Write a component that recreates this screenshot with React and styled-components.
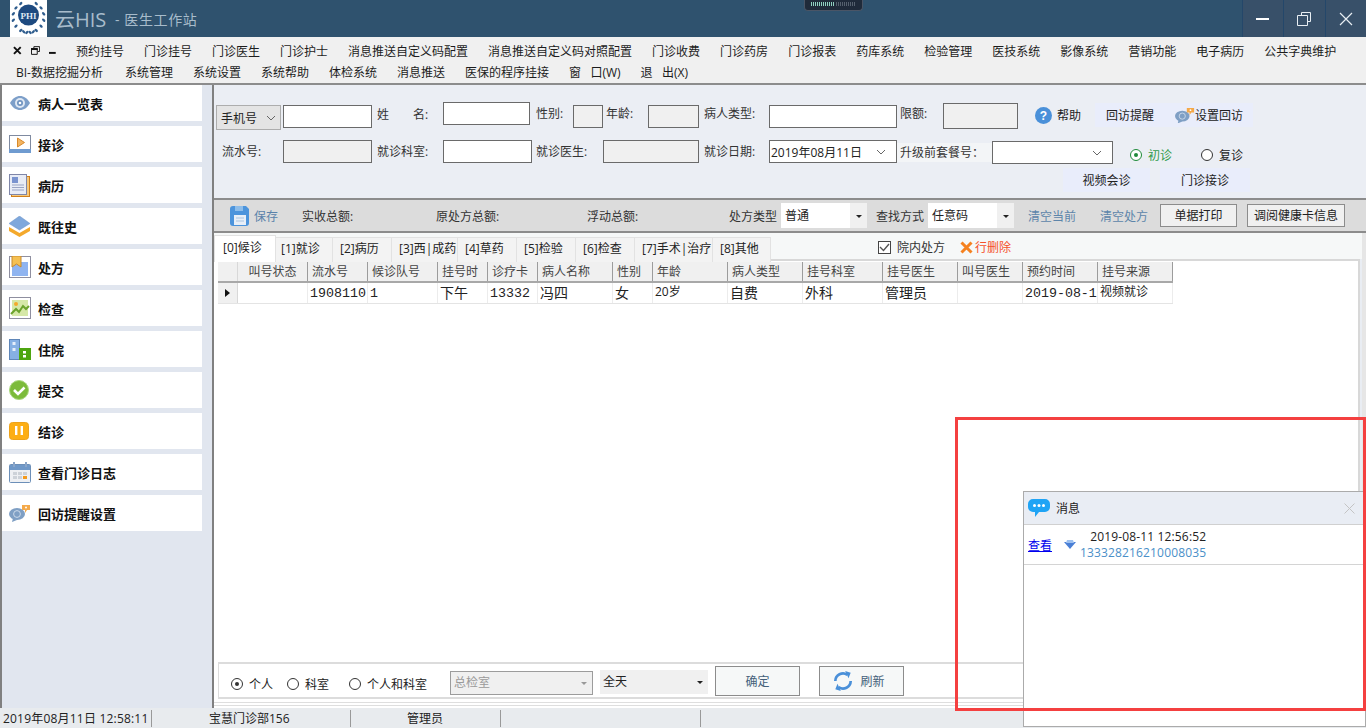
import React from "react";
import styled, { createGlobalStyle } from "styled-components";

const FONT = `"Open Sans", "Noto Sans CJK SC", "Liberation Sans", sans-serif`;

const Global = createGlobalStyle`
  html, body { margin: 0; padding: 0; overflow: hidden; background: #fff; }
  * { box-sizing: border-box; }
  body { font-family: ${FONT}; font-size: 12px; color: #333; }
`;

const TOP_MENU = ["预约挂号", "门诊挂号", "门诊医生", "门诊护士", "消息推送自定义码配置", "消息推送自定义码对照配置", "门诊收费", "门诊药房", "门诊报表", "药库系统", "检验管理", "医技系统", "影像系统", "营销功能", "电子病历", "公共字典维护"];
const SUB_MENU = ["BI-数据挖掘分析", "系统管理", "系统设置", "系统帮助", "体检系统", "消息推送", "医保的程序挂接", "窗   口(W)", "退   出(X)"];
const TABS = [["[0]候诊", 62, 8], ["[1]就诊", 57, 5], ["[2]病历", 59, 7], ["[3]西|成药", 66, 7], ["[4]草药", 59, 7], ["[5]检验", 59, 7], ["[6]检查", 59, 7], ["[7]手术|治疗", 78, 7], ["[8]其他", 58, 7]];
const COLUMNS = [
  ["叫号状态", 70, "", "center"], ["流水号", 60, "1908110", "left", true], ["候诊队号", 70, "1", "left", true], ["挂号时", 50, "下午"], ["诊疗卡", 50, "13332", "left", true],
  ["病人名称", 75, "冯四"], ["性别", 40, "女"], ["年龄", 75, "20岁", "left", false, true], ["病人类型", 75, "自费"], ["挂号科室", 80, "外科"],
  ["挂号医生", 75, "管理员"], ["叫号医生", 65, ""], ["预约时间", 75, "2019-08-1", "left", true], ["挂号来源", 75, "视频就诊", "left", false, true],
];

const Eye = () => (
  <svg width="22" height="16" viewBox="0 0 22 16"><path d="M1 8C4 3 7 1 11 1s7 2 10 7c-3 5-6 7-10 7S4 13 1 8z" fill="#7d9fc9" /><circle cx="11" cy="8" r="5" fill="#dfe8f3" /><circle cx="11" cy="8" r="3" fill="#6f93c0" /><circle cx="11" cy="8" r="1.3" fill="#fff" /></svg>
);
const Play = () => (
  <svg width="22" height="18" viewBox="0 0 22 18"><rect x=".5" y=".5" width="21" height="17" fill="#fff" stroke="#7f8aa0" /><rect y="14" width="22" height="4" fill="#6f9bd0" /><path d="M8.5 3l7 4.5-7 4.5z" fill="#f3b562" stroke="#d98a2b" /></svg>
);
const Doc = () => (
  <svg width="21" height="23" viewBox="0 0 21 23"><rect x="2.5" y="2.5" width="18" height="20" fill="#f8c878" stroke="#d0801c" /><rect x=".5" y=".5" width="17" height="20" fill="#e8ecf6" stroke="#7f86a8" /><rect x="3" y="3" width="6" height="6" fill="#7a93cf" /><path d="M3 11h12M3 13.5h12M3 16h12" stroke="#9aa4c4" /></svg>
);
const Layers = () => (
  <svg width="21" height="21" viewBox="0 0 21 21"><path d="M0 11l10.5 6L21 11v4l-10.5 6L0 15z" fill="#f4a92c" /><path d="M10.5 0L21 7.5 10.5 14 0 7.5z" fill="#7fa8dc" stroke="#6b93c8" strokeWidth=".5" /></svg>
);
const Bookmark = () => (
  <svg width="22" height="22" viewBox="0 0 22 22"><rect x=".5" y=".5" width="21" height="21" fill="#fff" stroke="#8f8fa0" /><rect x="3" y="6" width="16" height="14" fill="#8fb4f0" /><path d="M3 0h9v11L7.5 8 3 11z" fill="#f5c052" stroke="#c98a2b" /></svg>
);
const Chart = () => (
  <svg width="22" height="22" viewBox="0 0 22 22"><rect x=".5" y=".5" width="21" height="21" fill="#fff" stroke="#8f8fa0" /><rect x="3" y="3" width="16" height="16" fill="#d6e8a8" /><circle cx="7" cy="7" r="2" fill="#f4a92c" /><path d="M2 17l5-5 3 3 4-6 3 3 3-3" fill="none" stroke="#6ba32c" strokeWidth="2" /></svg>
);
const Building = () => (
  <svg width="22" height="21" viewBox="0 0 22 21"><rect x=".5" y=".5" width="10" height="20" fill="#86b0e4" stroke="#5f86b8" /><rect x="3.5" y="3" width="3" height="3" fill="#e6eefa" /><rect x="3.5" y="9" width="3" height="3" fill="#e6eefa" /><rect x="10" y="9" width="12" height="12" fill="#4da510" /><rect x="14" y="12" width="3" height="2.5" fill="#fff" /><rect x="14" y="16" width="3" height="2.5" fill="#fff" /></svg>
);
const Check = () => (
  <svg width="20" height="20" viewBox="0 0 20 20"><circle cx="10" cy="10" r="9.5" fill="#7cbb3a" stroke="#a8d77d" /><path d="M5 10l4 4 6.5-6.5" fill="none" stroke="#fff" strokeWidth="2.6" /></svg>
);
const Pause = () => (
  <svg width="20" height="18" viewBox="0 0 20 18"><rect x=".5" y=".5" width="19" height="17" rx="3" fill="#fdae14" stroke="#eda21a" /><rect x="6" y="4" width="2.4" height="9" fill="#fff" /><rect x="11.6" y="4" width="2.4" height="9" fill="#fff" /></svg>
);
const Calendar = () => (
  <svg width="22" height="21" viewBox="0 0 22 21"><rect x=".5" y="2.5" width="21" height="18" rx="1" fill="#eef0f3" stroke="#6c8fb8" /><rect x="1" y="3" width="20" height="5" fill="#6f98c8" /><rect x="4" y="0" width="2" height="5" fill="#8aa5c8" /><rect x="16" y="0" width="2" height="5" fill="#8aa5c8" /><path d="M4 10h4v3H4zM9 10h4v3H9zM14 10h4v3h-4zM4 14h4v3H4zM9 14h4v3H9z" fill="#cdd2d8" /><rect x="14" y="14" width="4" height="3" fill="#f49a1c" /></svg>
);
const Chat = ({ size = 22 }) => (
  <svg width={size} height={size * 0.82} viewBox="0 0 22 18"><ellipse cx="8" cy="10" rx="8" ry="6" fill="#7f9fc4" /><path d="M4 14l-1 4 5-2z" fill="#7f9fc4" /><circle cx="8" cy="10" r="3.4" fill="none" stroke="#cbd9ea" /><path d="M13 1h8v5h-3l-2 3V6h-3z" fill="#f4a94a" /><circle cx="17" cy="3.5" r="1" fill="#fff" /></svg>
);
const Help = () => (
  <svg width="17" height="17" viewBox="0 0 17 17"><circle cx="8.5" cy="8.5" r="8.5" fill="#4a90d9" /><text x="8.5" y="13" textAnchor="middle" fontSize="12" fontWeight="700" fill="#fff" fontFamily="Liberation Sans">?</text></svg>
);
const Save = () => (
  <svg width="19" height="20" viewBox="0 0 19 20"><path d="M3 0h13l3 3v14a3 3 0 0 1-3 3H3a3 3 0 0 1-3-3V3a3 3 0 0 1 3-3z" fill="#4c94dc" /><rect x="5" y="0" width="8" height="5" fill="#8dbdea" /><rect x="4" y="9" width="12" height="10" fill="#e8eff8" /><path d="M6 12h8M6 15h8" stroke="#a9c4e0" /></svg>
);
const Refresh = () => (
  <svg width="22" height="22" viewBox="0 0 20 20"><path d="M3 10a7 7 0 0 1 11-5.6" fill="none" stroke="#4a90d9" strokeWidth="2.4" /><path d="M12 1l5 1.5-2 5z" fill="#4a90d9" /><path d="M17 10a7 7 0 0 1-11 5.6" fill="none" stroke="#4a90d9" strokeWidth="2.4" /><path d="M8 19l-5-1.5 2-5z" fill="#4a90d9" /></svg>
);
const Bubble = () => (
  <svg width="22" height="18" viewBox="0 0 22 18"><path d="M5 0h12a5 5 0 0 1 5 5v3a5 5 0 0 1-5 5H11l-4 5v-5H5a5 5 0 0 1-5-5V5a5 5 0 0 1 5-5z" fill="#1fa4f5" /><circle cx="6.5" cy="6.5" r="1.5" fill="#fff" /><circle cx="11" cy="6.5" r="1.5" fill="#fff" /><circle cx="15.5" cy="6.5" r="1.5" fill="#fff" /></svg>
);
const Chevron = () => (
  <svg width="10" height="6" viewBox="0 0 10 6"><path d="M1 1l4 4 4-4" fill="none" stroke="#666" /></svg>
);
const Logo = () => (
  <svg width="37" height="37" viewBox="0 0 37 37">
    <rect width="37" height="37" fill="#fff" />
    <g fill="#2f5d8e">
      {Array.from({ length: 16 }).map((_, i) => {
        const side = i % 2 ? 1 : -1;
        const t = ((Math.floor(i / 2) * 24 - 60) * Math.PI) / 180;
        const cx = 18.5 + side * 15.5 * Math.cos(t);
        const cy = 17 + 15.5 * Math.sin(t);
        return <ellipse key={i} cx={cx} cy={cy} rx="2" ry="1.2" transform={`rotate(${side * 45} ${cx} ${cy})`} />;
      })}
    </g>
    <circle cx="18.5" cy="15" r="10.5" fill="#1e4a80" />
    <text x="18.5" y="18.5" textAnchor="middle" fontSize="9" fontWeight="700" fill="#dfe8f3" fontFamily="Liberation Serif">PHI</text>
  </svg>
);

const SIDE_ITEMS = [
  ["病人一览表", <Eye />], ["接诊", <Play />], ["病历", <Doc />], ["既往史", <Layers />], ["处方", <Bookmark />], ["检查", <Chart />],
  ["住院", <Building />], ["提交", <Check />], ["结诊", <Pause />], ["查看门诊日志", <Calendar />], ["回访提醒设置", <Chat />],
];

export default function App() {
  return (
    <Page>
      <Global />
      <TitleBar>
        <LogoBox><Logo /></LogoBox>
        <AppName>云HIS</AppName>
        <AppSub>- 医生工作站</AppSub>
        <Notch><NotchOn /><NotchOff /></Notch>
        <WinButtons>
          <WinButton>
            <svg width="14" height="14" viewBox="0 0 14 14"><rect y="6" width="13" height="2" fill="#fff" /></svg>
          </WinButton>
          <WinButton>
            <svg width="14" height="14" viewBox="0 0 14 14"><path d="M4.5 3.5v-3h9v9h-3M.5 3.5h10v10H.5z" fill="none" stroke="#e8eef3" /></svg>
          </WinButton>
          <WinButton>
            <svg width="14" height="14" viewBox="0 0 14 14"><path d="M1 1l12 12M13 1L1 13" stroke="#e8eef3" strokeWidth="1.2" /></svg>
          </WinButton>
        </WinButtons>
      </TitleBar>

      <MenuBar>
        <MenuRow>
          <MdiIcons>
            <svg width="9" height="9" viewBox="0 0 9 9"><path d="M1 1l7 7M8 1L1 8" stroke="#111" strokeWidth="2" /></svg>
            <svg width="10" height="9" viewBox="0 0 10 9"><path d="M3 2V.5h6v5H7M.5 2.5h6v6h-6z" fill="none" stroke="#111" /><rect y="2" width="7" height="2" fill="#111" /></svg>
            <svg width="7" height="9" viewBox="0 0 7 9"><rect y="6" width="7" height="2" fill="#111" /></svg>
          </MdiIcons>
          {TOP_MENU.map(m => <MenuItem key={m}>{m}</MenuItem>)}
        </MenuRow>
        <MenuRow $sub>
          {SUB_MENU.map(m => <MenuItem key={m}>{m}</MenuItem>)}
        </MenuRow>
      </MenuBar>

      <Body>
        <Sidebar>
          {SIDE_ITEMS.map(([label, icon]) => (
            <SideCard key={label}>
              <SideIcon>{icon}</SideIcon>
              {label}
            </SideCard>
          ))}
        </Sidebar>

        <Content>
          <Form>
            <FormRow $h={38}>
              <Select $w={65} $mt={3} $h={25}>手机号<Chevron /></Select>
              <Gap $w={2} />
              <Input $w={89} $mt={3} />
              <Label $w={41} $mt={3} $pl={5}>姓</Label>
              <Label $w={30} $mt={3} $pl={0}>名:</Label>
              <Input $w={87} />
              <Label $w={43} $mt={2}>性别:</Label>
              <Input $w={30} $mt={3} $off />
              <Label $w={45} $mt={2} $pl={3}>年龄:</Label>
              <Input $w={51} $mt={3} $off />
              <Label $w={70} $mt={2} $pl={5}>病人类型:</Label>
              <Input $w={128} $mt={3} />
              <Label $w={46} $mt={2} $pl={3}>限额:</Label>
              <Input $w={75} $mt={1} $h={26} $off />
              <HelpWrap><Help />帮助</HelpWrap>
              <SoftButton $w={70} $mt={1}>回访提醒</SoftButton>
              <SoftButton $w={88} $mt={1}><Chat size={20} />设置回访</SoftButton>
            </FormRow>
            <FormRow $h={28}>
              <Label $w={67} $mt={2}>流水号:</Label>
              <Input $w={89} $off />
              <Label $w={71} $pl={5} $mt={2}>就诊科室:</Label>
              <Input $w={89} />
              <Label $w={71} $pl={4} $mt={2}>就诊医生:</Label>
              <Input $w={96} $off />
              <Label $w={70} $pl={5} $mt={2}>就诊日期:</Label>
              <Input $w={128} $date>2019年08月11日<Chevron /></Input>
              <PlanLabel>升级前套餐号：</PlanLabel>
              <Input $w={121} $date $mt={1}><span /><Chevron /></Input>
              <RadioItem $ml={17} $w={71} $green $mt={6}><Radio $on $green />初诊</RadioItem>
              <RadioItem $mt={6}><Radio />复诊</RadioItem>
            </FormRow>
            <FormRow $h={24}>
              <SoftButton $w={87} $ml={847} $mt={0}>视频会诊</SoftButton>
              <SoftButton $w={90} $ml={10} $mt={0}>门诊接诊</SoftButton>
            </FormRow>
          </Form>

          <Toolbar>
            <SaveWrap><Save />保存</SaveWrap>
            <ToolText $w={134}>实收总额:</ToolText>
            <ToolText $w={151}>原处方总额:</ToolText>
            <ToolText $w={142}>浮动总额:</ToolText>
            <ToolText $w={52}>处方类型</ToolText>
            <Combo $w={86}>普通<ComboArrow /></Combo>
            <ToolText $w={52} $ml={9}>查找方式</ToolText>
            <Combo $w={86}>任意码<ComboArrow /></Combo>
            <ToolLink $w={72} $ml={14}>清空当前</ToolLink>
            <ToolLink $w={60}>清空处方</ToolLink>
            <ToolButton $w={77}>单据打印</ToolButton>
            <ToolButton $w={98} $ml={10}>调阅健康卡信息</ToolButton>
          </Toolbar>

          <Records>
            <TabStrip>
              {TABS.map(([t, w, pad], i) => <Tab key={t} $w={w} $pad={pad} $active={i === 0}>{t}</Tab>)}
              <CheckWrap><CheckBox><svg width="11" height="9" viewBox="0 0 11 9"><path d="M1 4l3.5 3.5L10 1" fill="none" stroke="#555" strokeWidth="1.4" /></svg></CheckBox>院内处方</CheckWrap>
              <DeleteRow>
                <svg width="13" height="13" viewBox="0 0 13 13"><path d="M1.5 1.5l10 10M11.5 1.5l-10 10" stroke="#f5811f" strokeWidth="3" /></svg>
                行删除
              </DeleteRow>
            </TabStrip>

            <GridArea>
              <Grid>
                <GridRow $head>
                  <RowHead $head />
                  {COLUMNS.map(([h, w, , a]) => <HeadCell key={h} $w={w} $align={a}>{h}</HeadCell>)}
                </GridRow>
                <GridRow>
                  <RowHead><RowArrow /></RowHead>
                  {COLUMNS.map(([h, w, v, , mono, small]) => <DataCell key={h} $w={w} $mono={mono} $small={small}>{v}</DataCell>)}
                </GridRow>
              </Grid>
            </GridArea>
          </Records>

          <BottomBar>
            <BottomInner>
              <RadioItem $ml={12} $w={56} $mt={6}><Radio $on />个人</RadioItem>
              <RadioItem $w={62} $mt={6}><Radio />科室</RadioItem>
              <RadioItem $w={101} $mt={6}><Radio />个人和科室</RadioItem>
              <DisabledSelect>总检室<ComboArrow $gray /></DisabledSelect>
              <DayCombo>全天<ComboArrow /></DayCombo>
              <PlainButton $ml={7}>确定</PlainButton>
              <PlainButton $ml={19} $pr={6}><Refresh />刷新</PlainButton>
            </BottomInner>
            <BottomRule />
          </BottomBar>
        </Content>
      </Body>

      <StatusBar>
        <StatusCell $w={152} $pl={3} $ls={0.2}>2019年08月11日 12:58:11</StatusCell>
        <StatusCell $w={199} $pl={57}>宝慧门诊部156</StatusCell>
        <StatusCell $w={150} $pl={56}>管理员</StatusCell>
        <StatusCell $w={200} />
      </StatusBar>

      <RedFrame />
      <Popup>
        <PopupHead>
          <Bubble />
          <PopupTitle>消息</PopupTitle>
          <PopupClose>
            <svg width="11" height="11" viewBox="0 0 11 11"><path d="M.5.5l10 10M10.5.5l-10 10" stroke="#c4c4c4" /></svg>
          </PopupClose>
        </PopupHead>
        <PopupRow>
          <PopupLink>查看</PopupLink>
          <svg width="12" height="9" viewBox="0 0 12 9"><path d="M0 2h12L6 9z" fill="#4a7fd6" /><path d="M3 0h6l1 3H2z" fill="#9cc0f0" /></svg>
          <PopupText>
            <PopupTime>2019-08-11 12:56:52</PopupTime>
            <PopupCode>133328216210008035</PopupCode>
          </PopupText>
        </PopupRow>
      </Popup>
    </Page>
  );
}

const Page = styled.div`
  position: relative;
  width: 1366px;
  height: 728px;
  display: flex;
  flex-direction: column;
  overflow: hidden;
  background: #e9edf3;
`;

const TitleBar = styled.div`
  position: relative;
  flex: none;
  height: 37px;
  display: flex;
  align-items: center;
  padding-left: 10px;
  background: #2f526e;
`;
const LogoBox = styled.div`
  width: 37px;
  height: 37px;
`;
const AppName = styled.div`
  margin-left: 8px;
  width: 60px;
  font-size: 20px;
  color: #a8bccb;
`;
const AppSub = styled.div`
  font-size: 14px;
  letter-spacing: 0.6px;
  color: #a8bccb;
`;
const Notch = styled.div`
  position: absolute;
  left: 804px;
  top: 0;
  width: 59px;
  height: 11px;
  display: flex;
  gap: 2px;
  padding: 2px 6px 4px;
  background: #1f2a3a;
  border: 1px solid #4a5566;
  border-top: none;
  border-radius: 0 0 4px 4px;
`;
const NotchOn = styled.div`
  width: 23px;
  background: repeating-linear-gradient(90deg, #8fd0c0 0 1px, transparent 1px 2px);
`;
const NotchOff = styled.div`
  width: 20px;
  background: repeating-linear-gradient(90deg, #55606e 0 1px, transparent 1px 2px);
`;
const WinButtons = styled.div`
  margin-left: auto;
  display: flex;
  height: 37px;
`;
const WinButton = styled.div`
  width: 41.5px;
  display: flex;
  align-items: center;
  justify-content: center;
  background: #385069;
  border-left: 1px solid #24476a;
`;

const MenuBar = styled.div`
  flex: none;
  height: 48px;
  padding-top: 3px;
  background: #f0f0f0;
  border-bottom: 2px solid #8c8c8c;
`;
const MenuRow = styled.div`
  display: flex;
  align-items: center;
  gap: 20px;
  height: 21px;
  padding-left: ${p => (p.$sub ? "16px" : "13px")};
`;
const MdiIcons = styled.div`
  display: flex;
  align-items: center;
  gap: 9px;
  width: 43px;
`;
const MenuItem = styled.div`
  white-space: pre;
  color: #1c1c1c;
  font-size: 12px;
  &:first-child {
    padding-right: 2px;
  }
`;

const Body = styled.div`
  flex: 1;
  min-height: 0;
  display: flex;
`;
const Sidebar = styled.div`
  flex: none;
  width: 214px;
  display: flex;
  flex-direction: column;
  gap: 5px;
  padding-right: 10px;
  background: #e1e6ef;
  border-left: 2px solid #808080;
  border-right: 2px solid #808080;
`;
const SideCard = styled.div`
  width: 200px;
  height: 36px;
  flex: none;
  display: flex;
  align-items: center;
  background: #fff;
  font-size: 13px;
  font-weight: 700;
  color: #111;
`;
const SideIcon = styled.div`
  width: 36px;
  padding-left: 7px;
  display: flex;
  align-items: center;
`;

const Content = styled.div`
  flex: 1;
  min-width: 0;
  display: flex;
  flex-direction: column;
`;
const Form = styled.div`
  flex: none;
  height: 113px;
  padding: 17px 0 0 2px;
  background: #ebeef4;
`;
const FormRow = styled.div`
  display: flex;
  align-items: flex-start;
  height: ${p => p.$h}px;
`;
const Gap = styled.div`
  width: ${p => p.$w}px;
  flex: none;
`;
const Label = styled.div`
  flex: none;
  width: ${p => p.$w}px;
  margin-top: ${p => p.$mt || 0}px;
  padding-left: ${p => (p.$pl === undefined ? 6 : p.$pl)}px;
  line-height: 20px;
  white-space: nowrap;
`;
const Input = styled.div`
  flex: none;
  width: ${p => p.$w}px;
  height: ${p => p.$h || 23}px;
  margin-top: ${p => p.$mt || 0}px;
  background: ${p => (p.$off ? "#f0f0f0" : "#fff")};
  border: 1px solid #6a6a6a;
  display: ${p => (p.$date ? "flex" : "block")};
  align-items: center;
  justify-content: space-between;
  padding: ${p => (p.$date ? "0 10px 0 1px" : "0")};
  color: #222;
  white-space: nowrap;
`;
const Select = styled.div`
  flex: none;
  width: ${p => p.$w}px;
  height: ${p => p.$h}px;
  margin-top: ${p => p.$mt}px;
  display: flex;
  align-items: center;
  justify-content: space-between;
  padding: 0 4px;
  background: #e4e4e4;
  border: 1px solid #adadad;
  color: #222;
`;
const HelpWrap = styled.div`
  flex: none;
  width: 60px;
  margin: 4px 0 0 17px;
  display: flex;
  align-items: center;
  gap: 5px;
  color: #222;
`;
const SoftButton = styled.div`
  flex: none;
  width: ${p => p.$w}px;
  height: 24px;
  margin-top: ${p => p.$mt}px;
  margin-left: ${p => p.$ml || 0}px;
  display: flex;
  align-items: center;
  justify-content: center;
  background: #e9edfb;
  color: #222;
`;
const PlanLabel = styled.div`
  flex: none;
  width: 95px;
  height: 19px;
  margin-top: 3px;
  padding-left: 3px;
  line-height: 19px;
  background: #f3f5f7;
  white-space: nowrap;
`;
const RadioItem = styled.div`
  flex: none;
  width: ${p => (p.$w ? `${p.$w}px` : "auto")};
  margin-left: ${p => p.$ml || 0}px;
  margin-top: ${p => p.$mt || 0}px;
  display: flex;
  align-items: center;
  gap: 6px;
  color: ${p => (p.$green ? "#2f9a4a" : "#222")};
`;
const Radio = styled.span`
  position: relative;
  width: 12px;
  height: 12px;
  border-radius: 50%;
  border: 1px solid ${p => (p.$green ? "#1f8a3a" : "#333")};
  background: #fff;
  &::after {
    content: "";
    display: ${p => (p.$on ? "block" : "none")};
    position: absolute;
    left: 3px;
    top: 3px;
    width: 4px;
    height: 4px;
    border-radius: 50%;
    background: ${p => (p.$green ? "#1f8a3a" : "#333")};
  }
`;

const Toolbar = styled.div`
  flex: none;
  height: 35px;
  padding: 0 0 0 16px;
  display: flex;
  align-items: center;
  background: #dcdcdc;
  border-top: 2px solid #8c8c8c;
  border-bottom: 2px solid #8c8c8c;
`;
const SaveWrap = styled.div`
  flex: none;
  width: 72px;
  display: flex;
  align-items: center;
  gap: 5px;
  color: #5a82aa;
`;
const ToolText = styled.div`
  flex: none;
  width: ${p => p.$w}px;
  margin-left: ${p => p.$ml || 0}px;
  color: #333;
`;
const ToolLink = styled(ToolText)`
  color: #5d85aa;
`;
const Combo = styled.div`
  position: relative;
  flex: none;
  width: ${p => p.$w}px;
  height: 25px;
  padding-left: 4px;
  line-height: 25px;
  background: #fff;
  color: #222;
`;
const ComboArrow = styled.span`
  position: absolute;
  right: 0;
  top: 0;
  bottom: 0;
  width: 17px;
  background: #f0f0f0;
  &::after {
    content: "";
    position: absolute;
    left: 6px;
    top: 50%;
    margin-top: -1px;
    border: 3px solid transparent;
    border-top: 3px solid ${p => (p.$gray ? "#999" : "#222")};
  }
`;
const ToolButton = styled.div`
  flex: none;
  width: ${p => p.$w}px;
  height: 23px;
  margin-left: ${p => p.$ml || 0}px;
  line-height: 21px;
  text-align: center;
  background: #f0f0f0;
  border: 1px solid #8c8c8c;
  color: #222;
`;

const Records = styled.div`
  flex: 1;
  min-height: 0;
  display: flex;
  flex-direction: column;
  border-right: 4px solid #e6e6e6;
`;
const TabStrip = styled.div`
  flex: none;
  position: relative;
  z-index: 1;
  height: 26px;
  padding-top: 2px;
  display: flex;
  align-items: flex-start;
  background: #f6f8f8;
`;
const Tab = styled.div`
  flex: none;
  width: ${p => p.$w}px;
  height: ${p => (p.$active ? 27 : 25)}px;
  padding-left: ${p => p.$pad}px;
  line-height: ${p => (p.$active ? 23 : 22)}px;
  background: ${p => (p.$active ? "#fff" : "#f3f3f3")};
  border: 1px solid #e2e2e2;
  border-left-width: ${p => (p.$active ? 1 : 0)}px;
  border-bottom: none;
  margin-top: ${p => (p.$active ? 0 : 2)}px;
  color: #222;
  white-space: nowrap;
`;
const CheckWrap = styled.div`
  flex: none;
  height: 24px;
  margin-left: 107px;
  display: flex;
  align-items: center;
  gap: 6px;
  color: #333;
`;
const CheckBox = styled.span`
  width: 13px;
  height: 13px;
  display: flex;
  align-items: center;
  justify-content: center;
  background: #fff;
  border: 1px solid #444;
`;
const DeleteRow = styled.div`
  flex: none;
  height: 24px;
  margin-left: 15px;
  display: flex;
  align-items: center;
  gap: 2px;
  color: #f5512a;
`;

const GridArea = styled.div`
  flex: 1;
  min-height: 0;
  margin-right: 2px;
  padding: 1px 0 0 4px;
  background: #fff;
  border-top: 2px solid #d8d8d8;
  border-right: 2px solid #d8d8d8;
`;
const Grid = styled.div`
  width: 955px;
`;
const GridRow = styled.div`
  display: flex;
  height: 21px;
  background: ${p => (p.$head ? "#f0f0f0" : "#fff")};
  border-bottom: ${p => (p.$head ? "2px solid #a8a8a8" : "1px solid #e4e4e4")};
`;
const RowHead = styled.div`
  flex: none;
  width: 20px;
  display: flex;
  align-items: center;
  justify-content: center;
  background: #f0f0f0;
  border-right: 1px solid #d8d8d8;
`;
const RowArrow = styled.span`
  border: 4px solid transparent;
  border-left: 5px solid #111;
  border-right: none;
`;
const HeadCell = styled.div`
  flex: none;
  width: ${p => p.$w}px;
  padding: 0 4px;
  line-height: 19px;
  text-align: ${p => p.$align || "left"};
  color: #444;
  border-right: 1px solid #9c9c9c;
  white-space: nowrap;
  overflow: hidden;
`;
const DataCell = styled.div`
  flex: none;
  width: ${p => p.$w}px;
  padding: 0 2px;
  overflow: hidden;
  white-space: nowrap;
  line-height: ${p => (p.$mono ? 21 : p.$small ? 18 : 19)}px;
  font-family: ${p => (p.$mono ? `"Liberation Mono", "Noto Sans CJK SC", monospace` : FONT)};
  font-size: ${p => (p.$small ? 12 : p.$mono ? 13.3 : 14)}px;
  color: #222;
  border-right: 1px solid #ececec;
`;

const BottomBar = styled.div`
  flex: none;
  height: 46px;
  padding-left: 4px;
  background: #fff;
`;
const BottomInner = styled.div`
  height: 37px;
  display: flex;
  align-items: center;
  border: 1px solid #dcdcdc;
  border-right: none;
  border-top-width: 2px;
  border-bottom-width: 2px;
`;
const BottomRule = styled.div`
  height: 6px;
  margin: 3px 0 0 -4px;
  background: repeating-linear-gradient(#dedede 0 1px, #fff 1px 3px);
`;
const DisabledSelect = styled.div`
  position: relative;
  flex: none;
  width: 143px;
  height: 24px;
  margin-top: 4px;
  padding-left: 3px;
  line-height: 22px;
  background: #f0f0f0;
  border: 1px solid #9c9c9c;
  color: #9a9a9a;
`;
const DayCombo = styled.div`
  position: relative;
  flex: none;
  width: 108px;
  height: 24px;
  margin: 3px 0 0 7px;
  padding-left: 3px;
  line-height: 24px;
  background: #f0f0f0;
  color: #222;
`;
const PlainButton = styled.div`
  flex: none;
  width: 85px;
  height: 30px;
  margin-left: ${p => p.$ml}px;
  padding-right: ${p => p.$pr || 0}px;
  display: flex;
  align-items: center;
  justify-content: center;
  gap: 6px;
  background: #f6f8f8;
  border: 1px solid #8c8c8c;
  color: #44607a;
`;

const StatusBar = styled.div`
  flex: none;
  height: 20px;
  display: flex;
  align-items: center;
  background: #e8ebee;
`;
const StatusCell = styled.div`
  flex: none;
  width: ${p => p.$w}px;
  height: 17px;
  padding-left: ${p => p.$pl || 0}px;
  line-height: 17px;
  letter-spacing: ${p => p.$ls || 0}px;
  color: #222;
  white-space: nowrap;
  border-right: 1px solid #999;
`;

const RedFrame = styled.div`
  position: absolute;
  left: 955px;
  top: 417px;
  width: 411px;
  height: 294px;
  z-index: 3;
  border: 3px solid #f44040;
  pointer-events: none;
`;
const Popup = styled.div`
  position: absolute;
  left: 1023px;
  top: 491px;
  width: 343px;
  height: 236px;
  z-index: 2;
  background: #fff;
  border: 1px solid #ababab;
`;
const PopupHead = styled.div`
  height: 33px;
  padding: 0 4px;
  display: flex;
  align-items: center;
  gap: 6px;
  background: #e9edf4;
  border-bottom: 1px solid #d0d0d0;
`;
const PopupTitle = styled.div`
  color: #222;
`;
const PopupClose = styled.div`
  margin-left: auto;
  margin-right: 6px;
  display: flex;
`;
const PopupRow = styled.div`
  height: 40px;
  display: flex;
  align-items: center;
  padding-left: 4px;
  border-bottom: 1px solid #d4d4d4;
`;
const PopupLink = styled.a`
  width: 36px;
  color: #0000ee;
  text-decoration: underline;
`;
const PopupText = styled.div`
  margin-left: 4px;
  display: flex;
  flex-direction: column;
  align-items: flex-end;
  line-height: 16px;
  letter-spacing: 0.15px;
`;
const PopupTime = styled.div`
  color: #222;
`;
const PopupCode = styled.div`
  color: #4a8fc8;
`;
